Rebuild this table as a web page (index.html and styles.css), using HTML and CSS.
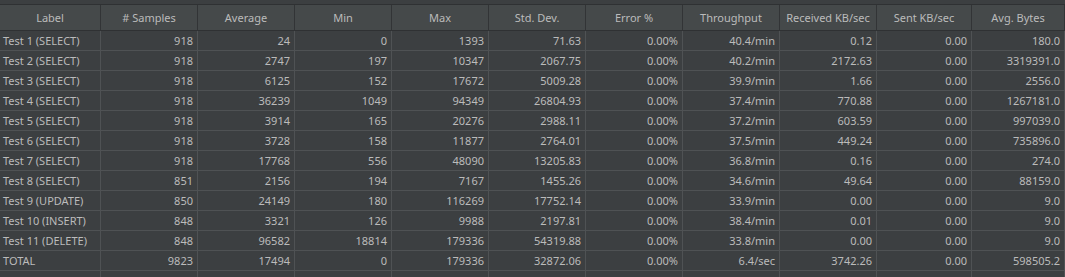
FILE: index.html
```html
<!DOCTYPE html>
<html>
<head>
<meta charset="utf-8">
<link rel="stylesheet" href="styles.css">
</head>
<body>
<div class="top-strip"></div>
<div class="table">
  <div class="hcell">Label</div>
  <div class="hcell"># Samples</div>
  <div class="hcell">Average</div>
  <div class="hcell">Min</div>
  <div class="hcell">Max</div>
  <div class="hcell">Std. Dev.</div>
  <div class="hcell">Error %</div>
  <div class="hcell">Throughput</div>
  <div class="hcell">Received KB/sec</div>
  <div class="hcell">Sent KB/sec</div>
  <div class="hcell">Avg. Bytes</div>

  <div class="cell label">Test 1 (SELECT)</div><div class="cell">918</div><div class="cell">24</div><div class="cell">0</div><div class="cell">1393</div><div class="cell">71.63</div><div class="cell">0.00%</div><div class="cell">40.4/min</div><div class="cell">0.12</div><div class="cell">0.00</div><div class="cell">180.0</div>
  <div class="cell label">Test 2 (SELECT)</div><div class="cell">918</div><div class="cell">2747</div><div class="cell">197</div><div class="cell">10347</div><div class="cell">2067.75</div><div class="cell">0.00%</div><div class="cell">40.2/min</div><div class="cell">2172.63</div><div class="cell">0.00</div><div class="cell">3319391.0</div>
  <div class="cell label">Test 3 (SELECT)</div><div class="cell">918</div><div class="cell">6125</div><div class="cell">152</div><div class="cell">17672</div><div class="cell">5009.28</div><div class="cell">0.00%</div><div class="cell">39.9/min</div><div class="cell">1.66</div><div class="cell">0.00</div><div class="cell">2556.0</div>
  <div class="cell label">Test 4 (SELECT)</div><div class="cell">918</div><div class="cell">36239</div><div class="cell">1049</div><div class="cell">94349</div><div class="cell">26804.93</div><div class="cell">0.00%</div><div class="cell">37.4/min</div><div class="cell">770.88</div><div class="cell">0.00</div><div class="cell">1267181.0</div>
  <div class="cell label">Test 5 (SELECT)</div><div class="cell">918</div><div class="cell">3914</div><div class="cell">165</div><div class="cell">20276</div><div class="cell">2988.11</div><div class="cell">0.00%</div><div class="cell">37.2/min</div><div class="cell">603.59</div><div class="cell">0.00</div><div class="cell">997039.0</div>
  <div class="cell label">Test 6 (SELECT)</div><div class="cell">918</div><div class="cell">3728</div><div class="cell">158</div><div class="cell">11877</div><div class="cell">2764.01</div><div class="cell">0.00%</div><div class="cell">37.5/min</div><div class="cell">449.24</div><div class="cell">0.00</div><div class="cell">735896.0</div>
  <div class="cell label">Test 7 (SELECT)</div><div class="cell">918</div><div class="cell">17768</div><div class="cell">556</div><div class="cell">48090</div><div class="cell">13205.83</div><div class="cell">0.00%</div><div class="cell">36.8/min</div><div class="cell">0.16</div><div class="cell">0.00</div><div class="cell">274.0</div>
  <div class="cell label">Test 8 (SELECT)</div><div class="cell">851</div><div class="cell">2156</div><div class="cell">194</div><div class="cell">7167</div><div class="cell">1455.26</div><div class="cell">0.00%</div><div class="cell">34.6/min</div><div class="cell">49.64</div><div class="cell">0.00</div><div class="cell">88159.0</div>
  <div class="cell label">Test 9 (UPDATE)</div><div class="cell">850</div><div class="cell">24149</div><div class="cell">180</div><div class="cell">116269</div><div class="cell">17752.14</div><div class="cell">0.00%</div><div class="cell">33.9/min</div><div class="cell">0.00</div><div class="cell">0.00</div><div class="cell">9.0</div>
  <div class="cell label">Test 10 (INSERT)</div><div class="cell">848</div><div class="cell">3321</div><div class="cell">126</div><div class="cell">9988</div><div class="cell">2197.81</div><div class="cell">0.00%</div><div class="cell">38.4/min</div><div class="cell">0.01</div><div class="cell">0.00</div><div class="cell">9.0</div>
  <div class="cell label">Test 11 (DELETE)</div><div class="cell">848</div><div class="cell">96582</div><div class="cell">18814</div><div class="cell">179336</div><div class="cell">54319.88</div><div class="cell">0.00%</div><div class="cell">33.8/min</div><div class="cell">0.00</div><div class="cell">0.00</div><div class="cell">9.0</div>
  <div class="cell label">TOTAL</div><div class="cell">9823</div><div class="cell">17494</div><div class="cell">0</div><div class="cell">179336</div><div class="cell">32872.06</div><div class="cell">0.00%</div><div class="cell">6.4/sec</div><div class="cell">3742.26</div><div class="cell">0.00</div><div class="cell">598505.2</div>
  <div class="cell"></div><div class="cell"></div><div class="cell"></div><div class="cell"></div><div class="cell"></div><div class="cell"></div><div class="cell"></div><div class="cell"></div><div class="cell"></div><div class="cell"></div><div class="cell"></div>
</div>
</body>
</html>
```

FILE: styles.css
```css
html, body {
  margin: 0;
  padding: 0;
  background: #3c3f41;
}
body {
  height: 277px;
  overflow: hidden;
  font-family: "Noto Sans", "Open Sans", sans-serif;
  font-size: 11px;
  color: #bbbbbb;
}
.top-strip {
  height: 4px;
  background: #3c3f41;
  border-bottom: 1px solid #2f3133;
}
.table {
  display: grid;
  grid-template-columns: 101px 97px 97px 97px 97px 97px 97px 97px 97px 95px 93px;
  grid-auto-rows: 20px;
  grid-template-rows: 26px;
  height: 272px;
  overflow: hidden;
}
.hcell {
  background: #45494a;
  border-right: 1px solid #323436;
  border-bottom: 1px solid #2f3133;
  display: flex;
  align-items: center;
  justify-content: center;
  white-space: nowrap;
  box-sizing: border-box;
  padding-bottom: 1px;
}
.cell {
  background: #3c3f41;
  border-right: 1px solid #4f5254;
  border-bottom: 1px solid #4f5254;
  box-sizing: border-box;
  display: flex;
  align-items: center;
  justify-content: flex-end;
  padding: 0 4px 1px 3px;
  white-space: nowrap;
}
.cell.label {
  justify-content: flex-start;
}
```
